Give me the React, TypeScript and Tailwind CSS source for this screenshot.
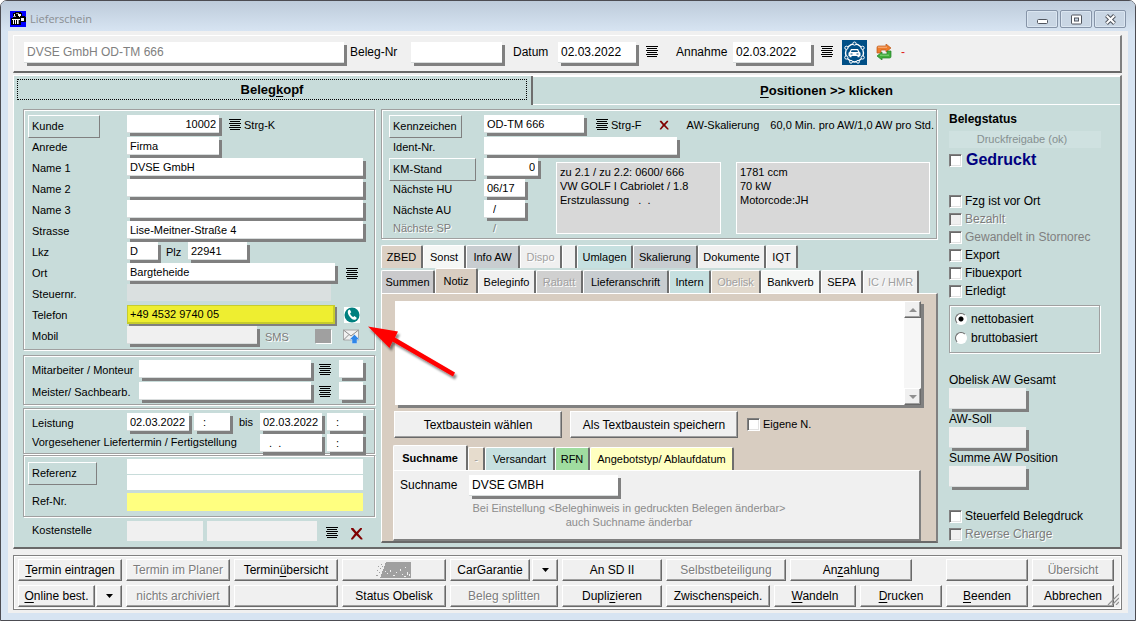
import type { ReactNode } from "react";
import clsx from "clsx";

const BUTTON =
  "flex items-center justify-center whitespace-nowrap border border-t-white border-l-white border-r-[#696969] border-b-[#696969] bg-[#f0f0f0] text-xs shadow-[inset_-1px_-1px_0_#a0a0a0]";
const FLAT_BUTTON =
  "h-[23px] border border-t-white border-l-white border-r-[#808080] border-b-[#808080] pl-[3px] text-left text-[11px]";
const GROUP = "border border-[#a0a0a0] shadow-[1px_1px_0_white,inset_1px_1px_0_white]";
const DISABLED = "text-[#7c7c7c] [text-shadow:1px_1px_0_white]";

// "&" marks the access key, as in "&Drucken"
function Caption({ text }: { text: string }) {
  const at = text.indexOf("&");
  if (at < 0) return <>{text}</>;
  return (
    <span>
      {text.slice(0, at)}
      <span className="underline underline-offset-2">{text[at + 1]}</span>
      {text.slice(at + 2)}
    </span>
  );
}

type FieldProps = {
  id?: string;
  label?: string;
  value?: string;
  className?: string;
  bg?: string;
  large?: boolean;
};

function Field({ id, label, value = "", className, bg = "bg-white", large }: FieldProps) {
  return (
    <input
      id={id}
      aria-label={label}
      defaultValue={value}
      className={clsx(
        "block min-w-0 rounded-none border-b border-[#d9dddd] px-[3px] shadow-[3px_3px_0_#808080] outline-none",
        large ? "h-[21px] text-xs" : "h-[18px] text-[11px]",
        bg,
        className,
      )}
    />
  );
}

function Row({ label, id, tall, narrow, children }: { label: string; id?: string; tall?: boolean; narrow?: boolean; children: ReactNode }) {
  return (
    <div className={clsx("flex items-start", tall ? "h-[22px]" : "h-[21px]")}>
      <label htmlFor={id} className={clsx("shrink-0 pl-1 leading-[21px]", narrow ? "w-[95px]" : "w-[99px]")}>
        {label}
      </label>
      {children}
    </div>
  );
}

function ListIcon() {
  return (
    <svg width="12" height="11" viewBox="0 0 12 11" shapeRendering="crispEdges" className="block">
      <path d="M0 .5h12M1 2.5h10M0 4.5h12M1 6.5h10M0 8.5h12M1 10.5h10" stroke="#000" />
    </svg>
  );
}

function ListButton({ label, className }: { label: string; className?: string }) {
  return (
    <button type="button" aria-label={label} className={clsx("shrink-0", className)}>
      <ListIcon />
    </button>
  );
}

function CrossIcon({ size }: { size: number }) {
  return (
    <svg width={size} height={size} viewBox="0 0 12 12" className="block">
      <path d="M1 1l2 0 3 3.5L9.500 1H11v1L7.500 6l4 4.500v1H10L6 7.600 2.500 11.500H1v-1L4.500 6 1 2z" fill="#800000" />
    </svg>
  );
}

function AppIcon() {
  return (
    <svg width="16" height="16" viewBox="0 0 16 16" shapeRendering="crispEdges">
      <path d="M0 0h16v16H0z" fill="#0000ff" />
      <path d="M3 2h2V1h6v1h1v3h3v1h1v5h-5v3H1V7h2z" fill="#000" />
      <path d="M2 8h8v1H2zM3 9h1v4H3zM5 9h1v4H5zM7 9h1v4H7zM11 7h3v3h-3zM8 3h3v2h-1v1H9V5H8zM4 3h1v2H4z" fill="#fff" />
      <path d="M3 5h3v1H3zM6 2h3v1H6zM8 9h1v4H8z" fill="#a0a0a0" />
    </svg>
  );
}

function CarBadge() {
  return (
    <svg width="25" height="25" viewBox="0 0 25 25" className="block">
      <path d="M0 0h25v25H0z" fill="#004f86" />
      <circle cx="12.500" cy="13" r="9" fill="none" stroke="#fff" strokeWidth="1.400" />
      <g fill="#004f86" stroke="#fff" strokeWidth="1">
        <circle cx="12.500" cy="3.600" r="1.600" />
        <circle cx="4.400" cy="7.800" r="1.600" />
        <circle cx="20.600" cy="7.800" r="1.600" />
        <circle cx="4.300" cy="17.500" r="1.600" />
        <circle cx="20.700" cy="17.500" r="1.600" />
        <circle cx="9" cy="21.800" r="1.400" />
        <circle cx="16" cy="21.800" r="1.400" />
      </g>
      <path d="M9 9h7l1.500 3 1 .8V16h-1v1.200h-2V16h-6v1.200h-2V16h-1v-3.200l1-.8z" fill="#fff" />
      <path d="M9.700 10.200h5.600l.8 1.800H8.900zM8.500 13.500h2v1h-2zM14.500 13.500h2v1h-2z" fill="#004f86" />
    </svg>
  );
}

function SwapIcon() {
  return (
    <svg width="16" height="16" viewBox="0 0 16 16" className="block">
      <path d="M1 9V3.500Q1 2 2.500 2H10V0l5 4-5 4V6H5v3z" fill="#ee7c2b" stroke="#b85a1c" strokeWidth=".7" />
      <path d="M15 7v5.500q0 1.500-1.500 1.500H6v2l-5-4 5-4v2h5V7z" fill="#3fae3a" stroke="#23802a" strokeWidth=".7" />
      <path d="M2 3.200h9" stroke="#f8b98a" />
      <path d="M4 11.200h9" stroke="#86d680" />
    </svg>
  );
}

function PhoneIcon() {
  return (
    <svg width="16" height="16" viewBox="0 0 16 16" className="block">
      <path d="M0 0h16v16H0z" fill="#fff" />
      <circle cx="8" cy="8" r="7.500" fill="#00807f" />
      <path d="M4.300 3.200l1.500-.8 1.500 2.900-1.200 1c.3 1.600 1.600 3.200 3.200 3.800l1.200-1 2.400 2-1.200 1.500c-1 .6-2.600.2-4.300-1.200-2-1.600-3.400-3.900-3.600-5.900-.1-1 .1-1.800.5-2.300z" fill="#fff" />
    </svg>
  );
}

function MailIcon() {
  return (
    <svg width="17" height="15" viewBox="0 0 17 15" className="block">
      <path d="M.5 1h15v10H.5z" fill="#f1f1f1" stroke="#a8a8a8" />
      <path d="M.5 1L8 7l7.500-6M.5 11L6 5.500M15.500 11L10 5.500" fill="none" stroke="#8c8c8c" />
      <path d="M11.500 5.500l5 5H14V14.500H9V10.500H6.500z" fill="#2f86e8" stroke="#cfe3fa" strokeWidth=".5" />
    </svg>
  );
}

function CaptionButton({ label, children }: { label: string; children: ReactNode }) {
  return (
    <button
      type="button"
      aria-label={label}
      className="flex h-[18px] w-8 items-center justify-center rounded-[2px] border border-[#8694a8] bg-[#c9d6e4] shadow-[inset_0_0_0_1px_#dbe6f1]"
    >
      <svg width="13" height="11" viewBox="0 0 13 11">
        {children}
      </svg>
    </button>
  );
}

function TitleBar() {
  return (
    <header className="flex h-[30px] items-center rounded-t-[5px] bg-linear-to-b from-[#bdcbda] to-[#d7e4f2] px-[9px] pt-1.5">
      <AppIcon />
      <h1 className="ml-1 flex-1 font-['Open_Sans',sans-serif] text-[11px] text-[#8a8e92]">Lieferschein</h1>
      <div className="flex gap-0.5">
        <CaptionButton label="Minimieren">
          <rect x="1.500" y="5.500" width="10" height="4" rx="1" fill="#fff" stroke="#50555e" />
        </CaptionButton>
        <CaptionButton label="Maximieren">
          <rect x="1.500" y="1" width="10" height="9" rx="1" fill="#fff" stroke="#50555e" />
          <rect x="4.500" y="4" width="4" height="3" fill="#c9d6e4" stroke="#50555e" />
        </CaptionButton>
        <CaptionButton label="Schließen">
          <path d="M2.500 1.500l8 8M10.500 1.500l-8 8" stroke="#50555e" strokeWidth="4" />
          <path d="M2.700 1.700l7.600 7.600M10.300 1.700l-7.600 7.600" stroke="#fff" strokeWidth="2" />
        </CaptionButton>
      </div>
    </header>
  );
}

function TopBar() {
  return (
    <section className="flex h-[38px] items-start border-t border-l border-r-2 border-b-2 border-t-white border-l-white border-r-[#808080] border-b-[#696969] pl-2.5 pt-1.5 text-xs leading-[21px]">
      <input
        aria-label="Beleg"
        defaultValue="DVSE GmbH OD-TM 666"
        className="block h-[21px] w-[320px] border-b border-[#d9dddd] bg-white px-[3px] text-xs text-[#808080] shadow-[3px_3px_0_#808080] outline-none"
      />
      <label htmlFor="belegnr" className="w-[67px] pl-1.5">Beleg-Nr</label>
      <Field id="belegnr" large className="w-[91px]" />
      <label htmlFor="datum" className="w-14 pl-[11px]">Datum</label>
      <Field id="datum" large value="02.03.2022" className="w-[78px]" />
      <ListButton label="Datum wählen" className="ml-2.5 mt-1" />
      <label htmlFor="annahme" className="w-[75px] pl-[18px]">Annahme</label>
      <Field id="annahme" large value="02.03.2022" className="w-[78px]" />
      <ListButton label="Annahme wählen" className="ml-2.5 mt-1" />
      <button type="button" aria-label="Fahrzeug" className="-mt-0.5 ml-[9px]"><CarBadge /></button>
      <button type="button" aria-label="Wechseln" className="ml-[9px] mt-0.5"><SwapIcon /></button>
      <span className="ml-[9px] text-[#e02020]">-</span>
    </section>
  );
}

function CustomerGroup() {
  return (
    <section className={clsx(GROUP, "pb-0.5 pl-1 pr-[11px] pt-[5px]")}>
      <div className="flex h-[22px] items-start">
        <div className="w-[99px] shrink-0">
          <button type="button" className={clsx(FLAT_BUTTON, "w-[72px]")}>Kunde</button>
        </div>
        <Field label="Kundennummer" value="10002" className="w-[92px] text-right" />
        <ListButton label="Kunden" className="ml-2.5 mt-1" />
        <span className="pl-[3px] leading-[21px]">Strg-K</span>
      </div>
      <Row label="Anrede" id="anrede"><Field id="anrede" value="Firma" className="w-[92px]" /></Row>
      <Row label="Name 1" id="name1"><Field id="name1" value="DVSE GmbH" className="flex-1" /></Row>
      <Row label="Name 2" id="name2"><Field id="name2" className="flex-1" /></Row>
      <Row label="Name 3" id="name3"><Field id="name3" className="flex-1" /></Row>
      <Row label="Strasse" id="strasse"><Field id="strasse" value="Lise-Meitner-Straße 4" className="flex-1" /></Row>
      <Row label="Lkz" id="lkz">
        <Field id="lkz" value="D" className="w-[31px]" />
        <label htmlFor="plz" className="w-[30px] pl-2 leading-[21px]">Plz</label>
        <Field id="plz" value="22941" className="w-[59px]" />
      </Row>
      <Row label="Ort" id="ort">
        <Field id="ort" value="Bargteheide" className="flex-1" />
        <ListButton label="Orte" className="ml-[11px] mr-[5px] mt-[5px]" />
      </Row>
      <Row label="Steuernr." id="steuernr">
        <input id="steuernr" className="mr-8 h-[17px] min-w-0 flex-1 bg-[#dae0e0] text-[11px] outline-none" />
      </Row>
      <Row label="Telefon" id="telefon">
        <input
          id="telefon"
          defaultValue="+49 4532 9740 05"
          className="h-[19px] min-w-0 flex-1 border border-r-2 border-b-2 border-[#c6cc2c] bg-[#eeee30] px-0.5 text-[11px] shadow-[2px_2px_0_#808080] outline-none"
        />
        <button type="button" aria-label="Anrufen" className="ml-[9px] mr-[3px] mt-0.5"><PhoneIcon /></button>
      </Row>
      <Row label="Mobil" id="mobil">
        <Field id="mobil" bg="bg-[#f0f0f0]" className="w-[130px]" />
        <span className={clsx("flex-1 pl-2 leading-[22px]", DISABLED)}>SMS</span>
        <span className="mt-[3px] h-[14px] w-4 bg-[#a0a0a0] shadow-[1px_1px_0_white]" />
        <button type="button" aria-label="Nachricht senden" className="ml-3 mr-[3px] mt-[3px]"><MailIcon /></button>
      </Row>
    </section>
  );
}

function StaffRow({ label, id }: { label: string; id: string }) {
  return (
    <div className="flex h-[22px] items-start">
      <label htmlFor={id} className="w-[111px] shrink-0 whitespace-nowrap pl-1 leading-5">{label}</label>
      <Field id={id} className="flex-1" />
      <ListButton label={`${label} wählen`} className="mx-2 mt-1" />
      <Field label={`${label} Kürzel`} className="w-6" />
    </div>
  );
}

function ScheduleGroup() {
  return (
    <section className={clsx(GROUP, "mt-[3px] h-[46px] pl-1 pr-[11px] pt-1")}>
      <Row label="Leistung" id="leistung">
        <Field id="leistung" value="02.03.2022" className="w-[62px]" />
        <Field label="Uhrzeit von" value=":" className="ml-[5px] w-9 pl-[9px]" />
        <label htmlFor="leistung-bis" className="flex-1 pl-[9px] leading-[19px]">bis</label>
        <Field id="leistung-bis" value="02.03.2022" className="w-[62px]" />
        <Field label="Uhrzeit bis" value=":" className="ml-[5px] w-9 pl-[9px]" />
      </Row>
      <div className="flex items-start">
        <label htmlFor="liefertermin" className="flex-1 whitespace-nowrap pl-1 leading-4">
          Vorgesehener Liefertermin / Fertigstellung
        </label>
        <Field id="liefertermin" value=".  ." className="w-[62px] pl-[9px]" />
        <Field label="Uhrzeit Liefertermin" value=":" className="ml-[5px] w-9 pl-[9px]" />
      </div>
    </section>
  );
}

function ReferenceGroup() {
  return (
    <section className={clsx(GROUP, "mt-px h-[62px] pl-1 pr-[11px] pt-[3px]")}>
      <div className="flex h-[34px] items-start">
        <div className="w-[99px] shrink-0 pt-[3px]">
          <button type="button" className={clsx(FLAT_BUTTON, "w-[69px]")}>Referenz</button>
        </div>
        <div className="flex min-w-0 flex-1 flex-col gap-px">
          <input aria-label="Referenz 1" className="h-[15px] bg-white px-[3px] outline-none" />
          <input aria-label="Referenz 2" className="h-[15px] bg-white px-[3px] outline-none" />
        </div>
      </div>
      <div className="flex items-start">
        <label htmlFor="refnr" className="w-[99px] shrink-0 pl-1 leading-4">Ref-Nr.</label>
        <input id="refnr" className="h-[18px] min-w-0 flex-1 bg-[#ffff80] px-[3px] outline-none" />
      </div>
    </section>
  );
}

function PointerArrow() {
  return (
    <svg width="96" height="60" viewBox="0 0 96 60" className="pointer-events-none absolute left-[344px] top-[214px] z-10">
      <defs>
        <filter id="soft" x="-20%" y="-20%" width="140%" height="150%">
          <feDropShadow dx="2" dy="3" stdDeviation="1" floodColor="#000" floodOpacity=".45" />
        </filter>
      </defs>
      <path d="M1 3.500L31 8.500 28 14.500 88 49.500 86 53.500 25.500 18.500 22.500 25z" fill="#ff0000" filter="url(#soft)" />
    </svg>
  );
}

function LeftColumn() {
  return (
    <div className="relative w-[352px] shrink-0">
      <CustomerGroup />
      <section className={clsx(GROUP, "mt-[5px] h-[50px] pl-1 pr-[11px] pt-1")}>
        <StaffRow label="Mitarbeiter / Monteur" id="monteur" />
        <StaffRow label="Meister/ Sachbearb." id="meister" />
      </section>
      <ScheduleGroup />
      <ReferenceGroup />
      <div className="mt-1 flex items-start pl-[5px] pr-3">
        <label htmlFor="kostenstelle" className="w-[99px] shrink-0 pl-1 leading-[18px]">Kostenstelle</label>
        <input id="kostenstelle" className="h-5 w-[76px] bg-[#f0f0f0] outline-none" />
        <input aria-label="Kostenstelle Bezeichnung" className="ml-1 h-5 min-w-0 flex-1 bg-[#f0f0f0] outline-none" />
        <ListButton label="Kostenstellen" className="ml-[9px] mr-3 mt-1.5" />
        <button type="button" aria-label="Kostenstelle entfernen" className="mt-1.5"><CrossIcon size={13} /></button>
      </div>
      <PointerArrow />
    </div>
  );
}

function VehicleGroup() {
  return (
    <section className={clsx(GROUP, "mr-px h-[130px] pl-[7px] pr-1.5 pt-[5px]")}>
      <div className="flex h-[22px] items-start">
        <div className="w-[95px] shrink-0">
          <button type="button" className={clsx(FLAT_BUTTON, "w-[73px]")}>Kennzeichen</button>
        </div>
        <Field label="Kennzeichen" value="OD-TM 666" className="w-[100px]" />
        <ListButton label="Fahrzeuge" className="ml-3 mt-1" />
        <span className="pl-[3px] leading-[21px]">Strg-F</span>
        <button type="button" aria-label="Fahrzeug entfernen" className="ml-[17px] mt-[5px]"><CrossIcon size={10} /></button>
        <span className="ml-[18px] flex-1 whitespace-nowrap leading-[21px]">AW-Skalierung</span>
        <span className="-mr-1 whitespace-nowrap leading-[21px]">60,0 Min. pro AW/1,0 AW pro Std.</span>
      </div>
      <Row label="Ident-Nr." id="ident" narrow><Field id="ident" className="w-[193px]" /></Row>
      <div className="flex items-start">
        <div className="w-[151px] shrink-0">
          <div className="flex h-[21px] items-start">
            <div className="w-[95px] shrink-0">
              <button type="button" className={clsx(FLAT_BUTTON, "w-[87px]")}>KM-Stand</button>
            </div>
            <Field label="KM-Stand" value="0" className="w-[54px] text-right" />
          </div>
          <Row label="Nächste HU" id="hu" narrow><Field id="hu" value="06/17" className="w-[41px]" /></Row>
          <Row label="Nächste AU" id="au" narrow><Field id="au" value="/" className="w-[41px] pl-[9px]" /></Row>
          <div className={clsx("flex leading-[14px]", DISABLED)}>
            <span className="w-[104px] pl-1">Nächste SP</span>
            <span>/</span>
          </div>
        </div>
        <div className="ml-4 mt-1 h-[72px] w-[165px] border border-white bg-[#d8d8d8] pl-[3px] pt-0.5 leading-[14px]">
          <p>zu 2.1 / zu 2.2: 0600/ 666</p>
          <p>VW GOLF I Cabriolet / 1.8</p>
          <p className="whitespace-pre">Erstzulassung   .  .</p>
        </div>
        <div className="ml-[15px] mt-1 h-[72px] flex-1 border border-white bg-[#d8d8d8] pl-[3px] pt-0.5 leading-[14px]">
          <p>1781 ccm</p>
          <p>70 kW</p>
          <p>Motorcode:JH</p>
        </div>
      </div>
    </section>
  );
}

type TabItem = { text: string; style: string; off?: boolean };

function Tab({ text, style, off }: TabItem) {
  return (
    <button
      type="button"
      role="tab"
      aria-label={text || "leer"}
      className={clsx(
        "h-[23px] shrink-0 whitespace-nowrap rounded-t-[2px] border-t border-l border-r-2 border-t-white border-l-white border-r-[#6e6e6e] text-[11px]",
        off && "text-[#a0a0a0] [text-shadow:1px_1px_0_white]",
        style,
      )}
    >
      {text}
    </button>
  );
}

const UPPER_TABS: TabItem[] = [
  { text: "ZBED", style: "w-[42px] bg-[#dbd0c4]" },
  { text: "Sonst", style: "w-[43px] bg-[#f5f7f5]" },
  { text: "Info AW", style: "w-[54px] bg-[#c8cdd0]" },
  { text: "Dispo", style: "w-[42px] bg-[#f0f0f0]", off: true },
  { text: "", style: "w-[15px] bg-[#f0f0f0]" },
  { text: "Umlagen", style: "w-[56px] bg-[#c6e0e0]" },
  { text: "Skalierung", style: "w-[65px] bg-[#c8cdd0]" },
  { text: "Dokumente", style: "w-[68px] bg-[#f0f0f0]" },
  { text: "IQT", style: "w-8 bg-[#f0f0f0]" },
];

const LOWER_TABS: TabItem[] = [
  { text: "Beleginfo", style: "w-[58px] bg-[#f0f0f0]" },
  { text: "Rabatt", style: "w-[47px] bg-[#d0d0d0]", off: true },
  { text: "Lieferanschrift", style: "w-[86px] bg-[#c8cdd0]" },
  { text: "Intern", style: "w-[42px] bg-[#c6e0e0]" },
  { text: "Obelisk", style: "w-[50px] bg-[#e1d9cd]", off: true },
  { text: "Bankverb", style: "w-[60px] bg-[#f5f7f5]" },
  { text: "SEPA", style: "w-[42px] bg-[#f0f0f0]" },
  { text: "IC / HMR", style: "w-[56px] bg-[#f0f0f0]", off: true },
];

const NAME_TABS: TabItem[] = [
  { text: "-", style: "w-[17px] bg-[#e6dccd]", off: true },
  { text: "Versandart", style: "w-[70px] bg-[#c6e0e0]" },
  { text: "RFN", style: "w-[35px] bg-[#a0dda0]" },
  { text: "Angebotstyp/ Ablaufdatum", style: "w-[144px] bg-[#ffffc0]" },
];

function ScrollArrow({ up }: { up?: boolean }) {
  return (
    <button type="button" aria-label={up ? "Nach oben" : "Nach unten"} className={clsx(BUTTON, "h-[17px] w-full")}>
      <svg width="8" height="4" viewBox="0 0 8 4">
        <path d={up ? "M4 0l4 4H0z" : "M0 0h8L4 4z"} fill="#909090" />
      </svg>
    </button>
  );
}

function NotePanel() {
  return (
    <div className="flex h-[250px] flex-col border-t border-l border-r-2 border-b-2 border-t-white border-l-white border-r-[#808080] border-b-[#696969] bg-[#d8cdc1] pl-[11px] pr-[15px] pt-[7px]">
      <div className="ml-0.5 flex h-[104px] bg-white shadow-[3px_3px_0_#808080]">
        <textarea aria-label="Notiz" className="min-w-0 flex-1 resize-none bg-white p-1 outline-none" />
        <div className="flex w-[17px] flex-col justify-between bg-[#f6f6f6]">
          <ScrollArrow up />
          <ScrollArrow />
        </div>
      </div>
      <div className="mt-1.5 flex h-[27px] items-center pl-px">
        <button type="button" className={clsx(BUTTON, "h-[27px] w-[168px]")}>Textbaustein wählen</button>
        <button type="button" className={clsx(BUTTON, "ml-2 h-[27px] w-[168px]")}>Als Textbaustein speichern</button>
        <label className="ml-[9px] flex items-center gap-[3px]">
          <Check />
          Eigene N.
        </label>
      </div>
      <div className="mt-[7px] flex h-[25px] items-end" role="tablist">
        <button
          type="button"
          role="tab"
          className="h-[25px] w-[75px] rounded-t-[2px] border-t border-l border-r-2 border-t-white border-l-white border-r-[#6e6e6e] bg-[#f0f0f0] text-[11px] font-bold"
        >
          Suchname
        </button>
        {NAME_TABS.map((tab) => <Tab key={tab.text} {...tab} />)}
      </div>
      <div className="h-[71px] border-t border-l border-r-2 border-b-2 border-t-white border-l-white border-r-[#808080] border-b-[#808080] bg-[#f0f0f0] pl-1.5 pt-1">
        <div className="flex items-start text-xs leading-[21px]">
          <label htmlFor="suchname" className="w-[69px]">Suchname</label>
          <Field id="suchname" large value="DVSE GMBH" className="w-[149px]" />
        </div>
        <p className="mt-[5px] w-[458px] text-center leading-[14px] text-[#8c8c8c]">
          Bei Einstellung &lt;Beleghinweis in gedruckten Belegen änderbar&gt;
          <br />
          auch Suchname änderbar
        </p>
      </div>
    </div>
  );
}

function MiddleColumn() {
  return (
    <div className="ml-1.5 min-w-0 flex-1">
      <VehicleGroup />
      <div className="mt-1.5 flex" role="tablist">
        {UPPER_TABS.map((tab) => <Tab key={tab.text} {...tab} />)}
      </div>
      <div className="flex h-[25px] items-end" role="tablist">
        <Tab text="Summen" style="w-[54px] border-r-0 bg-[#cacacc]" />
        <button
          type="button"
          role="tab"
          className="h-[25px] w-[43px] rounded-t-[2px] border-t border-l border-r-2 border-t-white border-l-white border-r-[#6e6e6e] bg-[#d8cdc1] text-[11px]"
        >
          Notiz
        </button>
        {LOWER_TABS.map((tab) => <Tab key={tab.text} {...tab} />)}
      </div>
      <NotePanel />
    </div>
  );
}

function Check({ off }: { off?: boolean }) {
  return (
    <input
      type="checkbox"
      disabled={off}
      className="size-[13px] shrink-0 appearance-none border border-t-[#808080] border-l-[#808080] border-r-white border-b-white bg-white shadow-[inset_1px_1px_0_#696969,inset_-1px_-1px_0_#e3e3e3] disabled:bg-[#f0f0f0]"
    />
  );
}

function StatusCheck({ text, dim, off }: { text: string; dim?: boolean; off?: boolean }) {
  return (
    <label className="flex h-[18px] items-center gap-[3px] whitespace-nowrap">
      <Check off={off} />
      <span className={clsx(off && DISABLED, dim && "text-[#808080]")}>{text}</span>
    </label>
  );
}

function BaseRadio({ text, checked }: { text: string; checked?: boolean }) {
  return (
    <label className="flex h-[19px] items-center gap-1">
      <input
        type="radio"
        name="basis"
        defaultChecked={checked}
        className="size-3 appearance-none rounded-full border border-t-[#696969] border-l-[#696969] border-r-white border-b-white bg-white checked:bg-[radial-gradient(circle,#000_2px,#fff_3px)]"
      />
      {text}
    </label>
  );
}

function AwField({ label, id }: { label: string; id: string }) {
  return (
    <div className="h-[39px]">
      <label htmlFor={id} className="block leading-4">{label}</label>
      <Field id={id} large bg="bg-[#f0f0f0]" className="w-[77px]" />
    </div>
  );
}

function StatusColumn() {
  return (
    <aside className="ml-[11px] w-[171px] shrink-0 text-xs">
      <h2 className="font-bold leading-5">Belegstatus</h2>
      <div className="mr-[19px] mt-0.5 bg-[#cfe1e0] pr-1.5 text-center text-[11px] leading-[17px] text-[#869090]">
        Druckfreigabe (ok)
      </div>
      <label className="flex h-6 items-center gap-1 text-base font-bold text-[#000080]">
        <Check />
        Gedruckt
      </label>
      <div className="mt-5">
        <StatusCheck text="Fzg ist vor Ort" />
        <StatusCheck text="Bezahlt" off />
        <StatusCheck text="Gewandelt in Stornorec" dim />
        <StatusCheck text="Export" />
        <StatusCheck text="Fibuexport" />
        <StatusCheck text="Erledigt" />
      </div>
      <div className={clsx(GROUP, "mr-5 mt-[5px] h-12 pl-[5px] pt-[3px]")}>
        <BaseRadio text="nettobasiert" checked />
        <BaseRadio text="bruttobasiert" />
      </div>
      <div className="mt-[19px]">
        <AwField label="Obelisk AW Gesamt" id="aw-gesamt" />
        <AwField label="AW-Soll" id="aw-soll" />
        <AwField label="Summe AW Position" id="aw-summe" />
      </div>
      <div className="mt-[18px]">
        <StatusCheck text="Steuerfeld Belegdruck" />
        <StatusCheck text="Reverse Charge" off />
      </div>
    </aside>
  );
}

function ToolButton({ text, style, off }: { text: string; style: string; off?: boolean }) {
  return (
    <button type="button" aria-label={text.replace("&", "") || "leer"} className={clsx(BUTTON, "h-[22px] grow", off && DISABLED, style)}>
      <Caption text={text} />
    </button>
  );
}

function DropButton({ label }: { label: string }) {
  return (
    <button type="button" aria-label={label} className={clsx(BUTTON, "h-[22px] w-[26px] shrink-0")}>
      <svg width="7" height="4" viewBox="0 0 7 4">
        <path d="M0 0h7L3.500 4z" />
      </svg>
    </button>
  );
}

function Toolbar() {
  return (
    <footer className="relative mt-1.5 flex flex-col gap-1 border border-[#808080] pb-0.5 pl-1 pr-[7px] pt-[3px] shadow-[inset_1px_1px_0_white,inset_-1px_-1px_0_white]">
      <div className="flex gap-1">
        <ToolButton text="&Termin eintragen" style="basis-[104px]" />
        <ToolButton text="Termin im Planer" style="basis-[104px]" off />
        <ToolButton text="Termin&übersicht" style="basis-[104px]" />
        <button type="button" aria-label="Logo" disabled className={clsx(BUTTON, "h-[22px] grow basis-[104px]")}>
          <svg width="36" height="16" viewBox="0 0 36 16" shapeRendering="crispEdges">
            <path d="M10 0h25v16H4z" fill="#a0a0a0" />
            <path d="M2 4h1v1H2zM4 6h1v1H4zM1 8h1v1H1zM3 10h1v1H3zM0 13h2v1H0zM5 2h1v1H5zM6 4h1v1H6z" fill="#a0a0a0" />
            <path d="M9 9h1v1H9zM11 11h1v1h-1zM14 8h1v2h-1zM17 13h2v1h-2zM20 10h1v1h-1zM24 7h1v2h-1zM26 12h1v1h-1zM29 5h1v1h-1zM31 10h1v3h-1zM28 14h2v1h-2zM33 12h1v2h-1z" fill="#f0f0f0" />
          </svg>
        </button>
        <div className="flex grow basis-[108px] gap-0.5">
          <ToolButton text="CarGarantie" style="basis-[80px]" />
          <DropButton label="CarGarantie Auswahl" />
        </div>
        <ToolButton text="An SD II" style="basis-[100px]" />
        <ToolButton text="Selbstbeteiligung" style="basis-[120px]" off />
        <ToolButton text="An&zahlung" style="basis-[122px]" />
        <div className="grow basis-[26px]" />
        <ToolButton text="" style="basis-[82px]" />
        <ToolButton text="Übersicht" style="basis-[82px]" off />
      </div>
      <div className="flex gap-1">
        <div className="flex grow basis-[104px] gap-px">
          <ToolButton text="&Online best." style="basis-[77px]" />
          <DropButton label="Online Auswahl" />
        </div>
        <ToolButton text="nichts archiviert" style="basis-[104px]" off />
        <ToolButton text="" style="basis-[104px]" />
        <ToolButton text="Status Obelisk" style="basis-[104px]" />
        <ToolButton text="Beleg splitten" style="basis-[108px]" off />
        <ToolButton text="Dupli&zieren" style="basis-[100px]" />
        <ToolButton text="Zwischenspeich." style="basis-[104px]" />
        <ToolButton text="&Wandeln" style="basis-[82px]" />
        <ToolButton text="&Drucken" style="basis-[82px]" />
        <ToolButton text="&Beenden" style="basis-[82px]" />
        <ToolButton text="Abbrechen" style="basis-[82px]" />
      </div>
      <svg width="12" height="12" viewBox="0 0 12 12" className="absolute bottom-1 right-0.5">
        <path d="M1 12L12 1M5 12l7-7M9 12l3-3" stroke="#909090" strokeWidth="1.200" />
      </svg>
    </footer>
  );
}

export default function App() {
  return (
    <div className="min-h-screen bg-white font-['Liberation_Sans',Arial,sans-serif] text-[11px] text-black">
      <div className="flex min-h-screen flex-col rounded-t-[7px] border border-[#4c4c52] bg-[#d7e4f2]">
        <TitleBar />
        <main className="mx-[7px] mb-[7px] flex-1 bg-[#f0f0f0] pb-0.5 pl-[5px] pr-1.5 pt-1">
          <TopBar />
          <div className="mt-0.5 border-t border-l border-r-2 border-b-2 border-t-white border-l-white border-r-[#808080] border-b-[#696969] bg-[#c8dcda] pb-1">
            <div className="grid h-[29px] grid-cols-[519fr_587fr] text-[13px] font-bold" role="tablist">
              <button type="button" role="tab" className="border-r-2 border-[#6e6e6e] pb-[5px] pl-[3px] pr-1 pt-[3px]">
                <span className="block h-[21px] border border-dotted border-black leading-[19px]">
                  <Caption text="Beleg&kopf" />
                </span>
              </button>
              <button type="button" role="tab" className="border-t border-b border-white">
                <Caption text="&Positionen >> klicken" />
              </button>
            </div>
            <div className="flex items-start pl-[9px] pt-1">
              <LeftColumn />
              <MiddleColumn />
              <StatusColumn />
            </div>
          </div>
          <Toolbar />
        </main>
      </div>
    </div>
  );
}
